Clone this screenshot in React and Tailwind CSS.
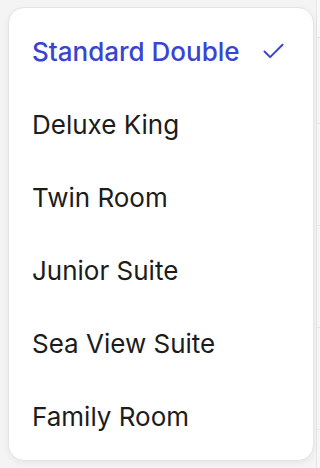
import { Check } from "lucide-react"

const rooms = [
  "Standard Double",
  "Deluxe King",
  "Twin Room",
  "Junior Suite",
  "Sea View Suite",
  "Family Room",
]

export default function App() {
  const selected = "Standard Double"

  return (
    <div className="relative w-[320px] h-[468px] overflow-hidden bg-[#f4f4f4] font-['Inter',sans-serif]">
      {/* faint table behind the popover */}
      <div className="ml-[316px] flex flex-col border-l border-[#e6e6e6] h-full">
        <div className="h-[38px] bg-[#fafafa] border-b border-[#e6e6e6]" />
        <div className="h-[86px] bg-[#f6f6f6] border-b border-[#e8e8e8]" />
        <div className="h-[102px] bg-[#f7f7f7] border-b border-[#e8e8e8]" />
        <div className="h-[102px] bg-[#f7f7f7] border-b border-[#e8e8e8]" />
        <div className="h-[102px] bg-[#f7f7f7] border-b border-[#e8e8e8]" />
        <div className="flex-1 bg-[#f7f7f7]" />
      </div>

      {/* dropdown list */}
      <ul className="absolute left-[8px] top-[7px] w-[306px] rounded-2xl border border-[#e4e4e4] bg-white py-[7px] shadow-[0_2px_6px_rgba(0,0,0,0.06)]">
        {rooms.map(room => (
          <li
            key={room}
            className={`flex h-[73px] items-center justify-between pl-[23px] pr-[26px] text-[26px] ${
              room === selected ? "font-medium text-[#3845d0]" : "text-[#1c1c1c]"
            }`}
          >
            <span>{room}</span>
            {room === selected && <Check size={27} strokeWidth={1.75} />}
          </li>
        ))}
      </ul>
    </div>
  )
}
